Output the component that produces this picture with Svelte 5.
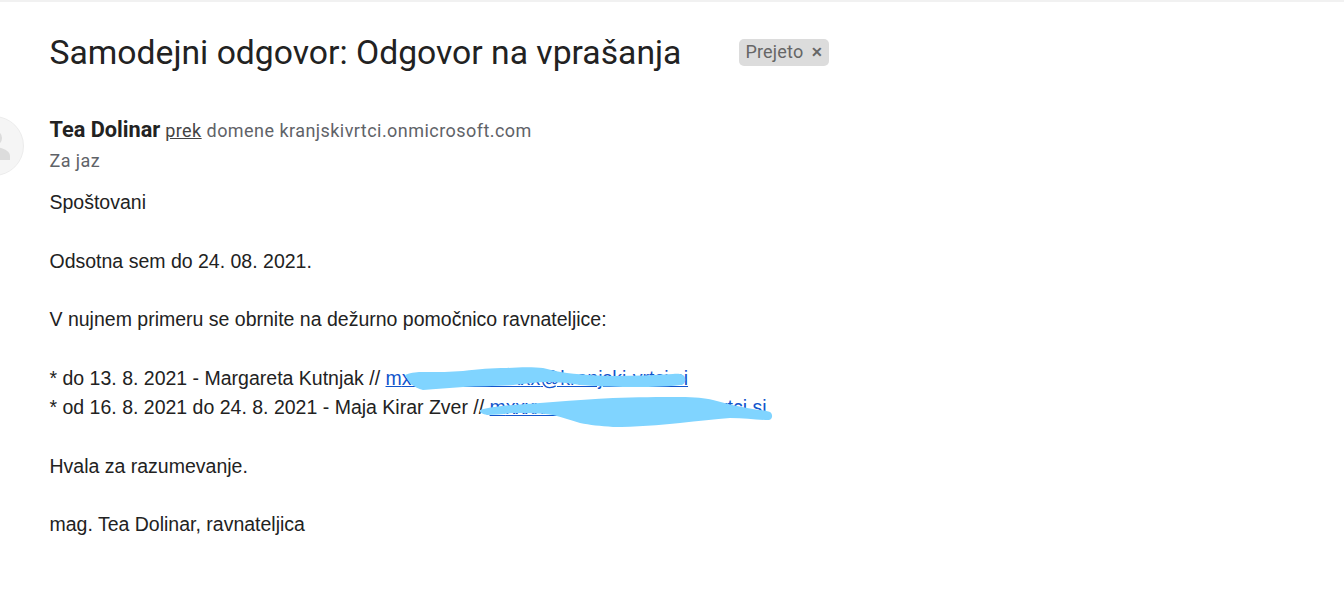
<script>
  const lines = [
    "Spoštovani",
    "",
    "Odsotna sem do 24. 08. 2021.",
    "",
    "V nujnem primeru se obrnite na dežurno pomočnico ravnateljice:",
    ""
  ];
</script>

<div class="page">
  <div class="topline"></div>
  <div class="subject-row">
    <h1>Samodejni odgovor: Odgovor na vprašanja</h1>
    <span class="label">Prejeto <span class="x">✕</span></span>
  </div>

  <div class="sender">
    <div class="avatar">
      <svg viewBox="0 0 60 60" width="60" height="60">
        <circle cx="30" cy="22" r="8" fill="#dcdcdc" />
        <path d="M14 40c0-6 10-9 16-9s16 3 16 9v4H14z" fill="#dcdcdc" />
      </svg>
    </div>
    <div class="who">
      <div class="from"><b>Tea Dolinar</b> <u>prek</u> domene kranjskivrtci.onmicrosoft.com</div>
      <div class="to">Za jaz</div>
    </div>
  </div>

  <div class="body">
    {#each lines as line}
      <div class="line">{line}</div>
    {/each}
    <div class="line">* do 13. 8. 2021 - Margareta Kutnjak // <a href="#top" class="mail one">m<span class="hidden">xxxxxxxxxxxxxx</span>@kranjski-vrtci.si</a></div>
    <div class="line">* od 16. 8. 2021 do 24. 8. 2021 - Maja Kirar Zver // <a href="#top" class="mail two">m<span class="hidden">xxxxxxxxxxxx</span>@kranjski-vrtci.si</a></div>
    <div class="line"></div>
    <div class="line">Hvala za razumevanje.</div>
    <div class="line"></div>
    <div class="line">mag. Tea Dolinar, ravnateljica</div>

    <!-- the blue scribbles lie over the two addresses -->
    <svg class="scribble" viewBox="0 0 1344 600" width="1344" height="600">
      <path d="M405 375C412 372 418 372 423 372C440 372 450 372 463 371C480 369 490 368 507 368C520 367 535 367 543 368C552 370 558 372 567 373C585 375 600 376 613 376C635 376 655 375 673 374C680 373 685 375 685 378C686 382 684 385 680 385C665 387 645 387 630 387C610 387 595 386 580 385C570 383 558 382 547 382C535 382 525 384 513 385C495 386 480 386 463 387C450 388 435 389 423 390C414 388 408 382 405 375Z" fill="#80d4ff" />
      <path d="M480 410C490 407 500 406 513 405C527 404 540 403 553 402C575 400 595 399 613 398C635 397 660 397 680 397C695 397 705 398 713 400C725 403 735 406 747 408C755 410 765 410 770 412C773 414 773 419 769 420C757 420 745 418 730 418C715 419 698 421 680 423C660 425 635 427 613 427C600 426 590 425 580 423C570 420 562 417 553 415C540 413 525 413 513 413C503 414 495 415 487 415C482 414 479 412 480 410Z" fill="#80d4ff" />
    </svg>
  </div>
</div>

<style>
  :global(body) {
    background: #fff;
    overflow: hidden;
  }

  .page {
    height: 600px;
    padding-left: 49.5px;
    box-sizing: border-box;
    overflow: hidden;
    color: #202124;
  }

  .topline {
    height: 2px;
    margin-left: -50px;
    background: #f1f1f1;
  }

  .subject-row {
    display: flex;
    align-items: center;
    padding-top: 29px;
    height: 42px;
  }

  h1 {
    margin: 0;
    font: 400 33.7px "Roboto", sans-serif;
    color: #222;
    white-space: nowrap;
  }

  .label {
    margin-left: 58px;
    padding: 0 6px;
    height: 27px;
    border-radius: 5px;
    background: #dcdcdc;
    color: #666;
    font: 400 18px/26px "Roboto", sans-serif;
    letter-spacing: 0.2px;
    white-space: nowrap;
  }

  .x {
    margin-left: 3px;
    font-size: 14px;
    font-weight: 700;
    vertical-align: 1px;
  }

  .sender {
    display: flex;
    margin-top: 43px;
    margin-left: -85.5px;
  }

  .avatar {
    flex: none;
    width: 60px;
    height: 60px;
    border-radius: 50%;
    background: #f5f5f5;
    border: 1px solid #ececec;
    box-sizing: border-box;
    overflow: hidden;
  }

  .avatar svg {
    display: block;
    margin: -1px;
  }

  .who {
    margin-left: 25.5px;
    padding-top: 2px;
    font-family: "Roboto", sans-serif;
  }

  .from {
    font-size: 18px;
    line-height: 24px;
    color: #5f6368;
    letter-spacing: 0.45px;
    white-space: nowrap;
  }

  .from b {
    font-size: 21.7px;
    letter-spacing: 0;
    color: #222;
  }

  .from u {
    color: #444;
  }

  .to {
    margin-top: 6px;
    font-size: 18px;
    line-height: 24px;
    color: #5f6368;
    letter-spacing: 0.4px;
  }

  .body {
    margin-top: 12px;
    font: 400 19.5px/29.3px "Liberation Sans", sans-serif;
    color: #222;
  }

  .line {
    min-height: 29.3px;
    white-space: nowrap;
  }

  .mail {
    color: #1155cc;
  }

  .one .hidden {
    letter-spacing: 0.15px;
  }

  .two .hidden {
    letter-spacing: -0.33px;
  }

  .scribble {
    position: absolute;
    top: 0;
    left: 0;
    pointer-events: none;
  }
</style>
